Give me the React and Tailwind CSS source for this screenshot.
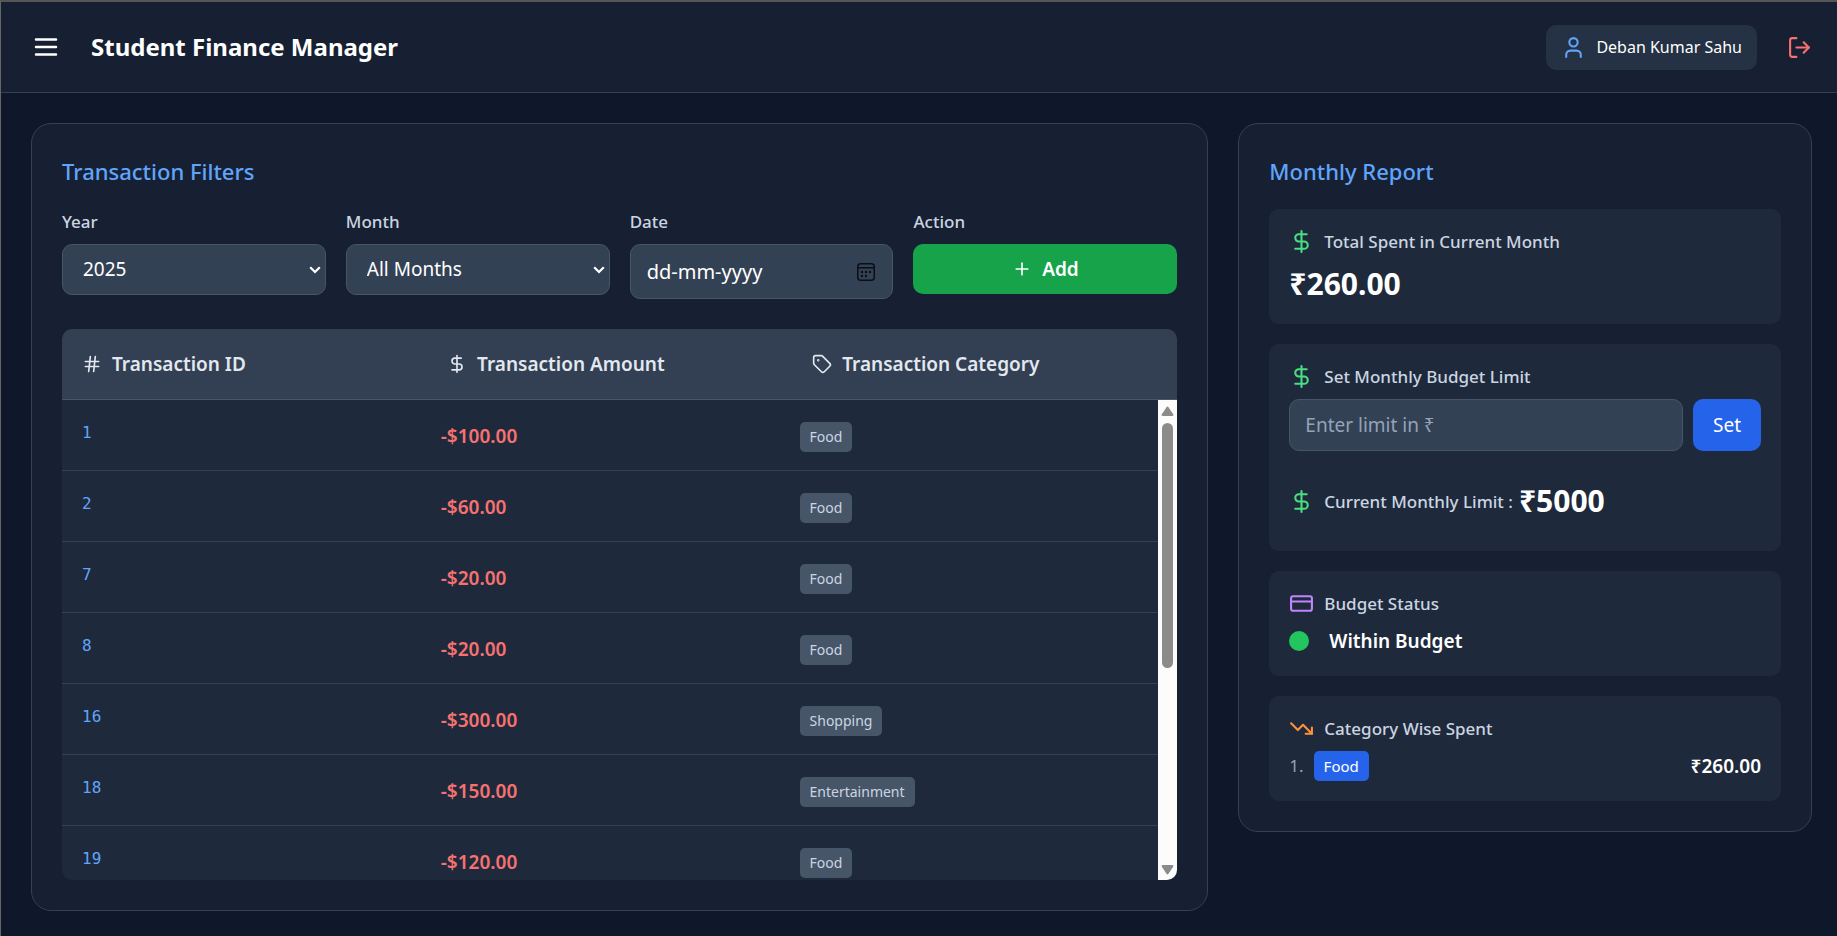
import React from "react";
import { CreditCard, DollarSign, Hash, LogOut, Plus, Tag, TrendingDown, User } from "lucide-react";

const transactions = [
  { id: 1, amount: 100, category: "Food" },
  { id: 2, amount: 60, category: "Food" },
  { id: 7, amount: 20, category: "Food" },
  { id: 8, amount: 20, category: "Food" },
  { id: 16, amount: 300, category: "Shopping" },
  { id: 18, amount: 150, category: "Entertainment" },
  { id: 19, amount: 120, category: "Food" },
];

function MenuIcon() {
  return (
    <svg className="size-[30px]" viewBox="0 0 24 24" fill="none" stroke="currentColor" strokeWidth="2" strokeLinecap="round" aria-hidden="true">
      <path d="M4 6h16M4 12h16M4 18h16" />
    </svg>
  );
}

function CalendarIcon() {
  return (
    <svg className="size-[20px]" viewBox="0 0 20 20" fill="none" stroke="currentColor" strokeWidth="1.5" aria-hidden="true">
      <rect x="1.75" y="1.75" width="16.5" height="16.5" rx="3" />
      <path d="M2 5.75h16" />
      <g fill="currentColor" stroke="none">
        <circle cx="6" cy="10" r="1.2" />
        <circle cx="10" cy="10" r="1.2" />
        <circle cx="14" cy="10" r="1.2" />
        <circle cx="6" cy="14" r="1.2" />
        <circle cx="10" cy="14" r="1.2" />
      </g>
    </svg>
  );
}

function Header() {
  return (
    <header className="flex h-[91px] items-center justify-between border-b border-[#334155] bg-[#162032] pr-[25px] pl-[30px]">
      <div className="flex items-center gap-[30px]">
        <button type="button" aria-label="Open menu" className="text-white">
          <MenuIcon />
        </button>
        <h1 className="text-[24px] leading-[36px] font-bold text-white">Student Finance Manager</h1>
      </div>
      <div className="flex items-center gap-[30px]">
        <div className="flex h-[45px] items-center gap-[10px] rounded-[10px] bg-[#253144] px-[15px]">
          <User className="size-[25px] text-[#60a5fa]" aria-hidden="true" />
          <span className="text-[16px] leading-[26px] text-white">Deban Kumar Sahu</span>
        </div>
        <button type="button" aria-label="Log out" className="text-[#f87171]">
          <LogOut className="size-[25px]" />
        </button>
      </div>
    </header>
  );
}

function Field({ id, label, children }) {
  return (
    <div>
      <label htmlFor={id} className="mb-[10px] block text-[17px] leading-[25px] font-medium text-[#cbd5e1]">
        {label}
      </label>
      {children}
    </div>
  );
}

function Select({ id, value }) {
  return (
    <div className="relative">
      <select id={id} defaultValue={value} className="block h-[51px] w-full appearance-none rounded-[10px] border border-[#475569] bg-[#334155] px-[20px] text-[19px] text-white">
        <option>{value}</option>
      </select>
      <svg className="pointer-events-none absolute inset-y-0 right-[5px] my-auto h-[8px] w-[12px] text-white" viewBox="0 0 12 8" fill="none" stroke="currentColor" strokeWidth="2.2" aria-hidden="true">
        <path d="M1.200 1.200 6 6l4.800-4.800" />
      </svg>
    </div>
  );
}

function Filters() {
  return (
    <form className="mb-[30px] grid grid-cols-4 items-start gap-[20px]">
      <Field id="year" label="Year">
        <Select id="year" value="2025" />
      </Field>
      <Field id="month" label="Month">
        <Select id="month" value="All Months" />
      </Field>
      <Field id="date" label="Date">
        <div className="flex h-[55px] items-center rounded-[10px] border border-[#475569] bg-[#334155] px-[16px]">
          <input id="date" type="text" placeholder="dd-mm-yyyy" className="min-w-0 flex-1 bg-transparent text-[20px] leading-[30px] text-white outline-none placeholder:text-white" />
          <button type="button" aria-label="Open calendar" className="text-[#0b0f14]">
            <CalendarIcon />
          </button>
        </div>
      </Field>
      <Field id="add" label="Action">
        <button id="add" type="button" className="flex h-[50px] w-full items-center justify-center gap-[10px] rounded-[10px] bg-[#16a34a] text-[19px] font-semibold text-white">
          <Plus className="size-[20px]" aria-hidden="true" />
          Add
        </button>
      </Field>
    </form>
  );
}

function ColumnHead({ icon: Icon, children }) {
  return (
    <th scope="col" className="flex items-center gap-[10px] text-left font-semibold">
      <Icon className="size-[20px]" aria-hidden="true" />
      {children}
    </th>
  );
}

function ScrollBar() {
  return (
    <div aria-hidden="true" className="absolute right-0 bottom-0 flex h-[480px] w-[19px] flex-col items-center bg-[#fcfcfc] pt-[5px] pb-[4px] text-[#8b8b8b]">
      <svg className="h-[12px] w-[15px]" viewBox="0 0 14 12" fill="currentColor">
        <path d="M6 2.2q1-1.400 2 0l4.700 7q.7 1.600-1 1.800H2.300q-1.700-.2-1-1.800z" />
      </svg>
      <div className="mt-[6px] h-[245px] w-[11px] rounded-full bg-[#8b8b8b]" />
      <div className="flex-1" />
      <svg className="h-[12px] w-[15px]" viewBox="0 0 14 12" fill="currentColor">
        <path d="M6 9.800q1 1.400 2 0l4.700-7q.7-1.600-1-1.800H2.300q-1.700.2-1 1.800z" />
      </svg>
    </div>
  );
}

function TransactionTable() {
  return (
    <div className="relative overflow-hidden rounded-[10px] bg-[#1e2a3c]">
      <table className="flex w-full flex-col">
        <thead className="block">
          <tr className="grid h-[71px] grid-cols-3 items-center gap-[20px] border-b border-[#475569] bg-[#333f52] px-[20px] text-[19px] leading-[30px] text-[#e2e8f0]">
            <ColumnHead icon={Hash}>Transaction ID</ColumnHead>
            <ColumnHead icon={DollarSign}>Transaction Amount</ColumnHead>
            <ColumnHead icon={Tag}>Transaction Category</ColumnHead>
          </tr>
        </thead>
        <tbody className="block h-[480px] overflow-hidden pr-[19px]">
          {transactions.map((t) => (
            <tr key={t.id} className="grid h-[71px] grid-cols-3 gap-[20px] border-b border-[#334155] px-[20px] pt-[20px]">
              <td className="font-['DejaVu_Sans_Mono',monospace] text-[16px] leading-[25px] text-[#60a5fa]">{t.id}</td>
              <td className="text-[19px] leading-[32px] font-semibold text-[#f87171]">-${t.amount.toFixed(2)}</td>
              <td className="flex items-start pt-[2px]">
                <span className="rounded-[5px] bg-[#475569] px-[10px] py-[5px] text-[14px] leading-[20px] text-[#cbd5e1]">{t.category}</span>
              </td>
            </tr>
          ))}
        </tbody>
      </table>
      <ScrollBar />
    </div>
  );
}

function CardTitle({ icon: Icon, color, htmlFor, children }) {
  const Text = htmlFor ? "label" : "h3";
  return (
    <div className="flex items-center gap-[10px]">
      <Icon className={`size-[25px] ${color}`} aria-hidden="true" />
      <Text htmlFor={htmlFor} className="text-[17px] leading-[25px] font-medium text-[#cbd5e1]">
        {children}
      </Text>
    </div>
  );
}

function Card({ children }) {
  return <section className="flex flex-col gap-[10px] rounded-[10px] bg-[#1e2a3c] p-[20px]">{children}</section>;
}

function MonthlyReport() {
  return (
    <div className="flex flex-col gap-[20px]">
      <Card>
        <CardTitle icon={DollarSign} color="text-[#4ade80]">Total Spent in Current Month</CardTitle>
        <p className="text-[30px] leading-[40px] font-bold text-white">₹260.00</p>
      </Card>
      <Card>
        <CardTitle icon={DollarSign} color="text-[#4ade80]" htmlFor="limit">Set Monthly Budget Limit</CardTitle>
        <div className="flex gap-[10px]">
          <input id="limit" type="text" placeholder="Enter limit in ₹" className="h-[52px] min-w-0 flex-1 rounded-[10px] border border-[#475569] bg-[#334155] px-[15px] text-[19px] text-white outline-none placeholder:text-[#94a3b8]" />
          <button type="button" className="rounded-[10px] bg-[#2563eb] px-[20px] text-[19px] text-white">Set</button>
        </div>
        <div className="flex items-center gap-[6px] pt-[20px] pb-[10px]">
          <CardTitle icon={DollarSign} color="text-[#4ade80]">Current Monthly Limit :</CardTitle>
          <p className="text-[30px] leading-[40px] font-bold text-white">₹5000</p>
        </div>
      </Card>
      <Card>
        <CardTitle icon={CreditCard} color="text-[#c084fc]">Budget Status</CardTitle>
        <div className="flex items-center gap-[20px]">
          <span className="size-[20px] rounded-full bg-[#22c55e]" />
          <p className="text-[19px] leading-[30px] font-semibold text-white">Within Budget</p>
        </div>
      </Card>
      <Card>
        <CardTitle icon={TrendingDown} color="text-[#fb923c]">Category Wise Spent</CardTitle>
        <div className="flex items-center justify-between">
          <div className="flex items-center gap-[10px]">
            <span className="text-[17px] leading-[30px] text-[#94a3b8]">1.</span>
            <span className="rounded-[5px] bg-[#2563eb] px-[10px] text-[15px] leading-[30px] text-white">Food</span>
          </div>
          <span className="text-[19px] leading-[30px] font-semibold text-white">₹260.00</span>
        </div>
      </Card>
    </div>
  );
}

function Panel({ title, className, children }) {
  return (
    <section className={`rounded-[20px] border border-[#334155] bg-[#162032] p-[30px] ${className}`}>
      <h2 className="mb-[20px] text-[22px] leading-[35px] font-medium text-[#60a5fa]">{title}</h2>
      {children}
    </section>
  );
}

export default function App() {
  return (
    <div className="min-h-screen border-t-2 border-l border-t-[#555] border-l-[#666] bg-[#0f172a] font-['Noto_Sans','Open_Sans',sans-serif]">
      <Header />
      <main className="grid grid-cols-3 items-start gap-[30px] pt-[30px] pr-[25px] pb-[24px] pl-[30px]">
        <Panel title="Transaction Filters" className="col-span-2">
          <Filters />
          <TransactionTable />
        </Panel>
        <Panel title="Monthly Report" className="col-span-1">
          <MonthlyReport />
        </Panel>
      </main>
    </div>
  );
}
